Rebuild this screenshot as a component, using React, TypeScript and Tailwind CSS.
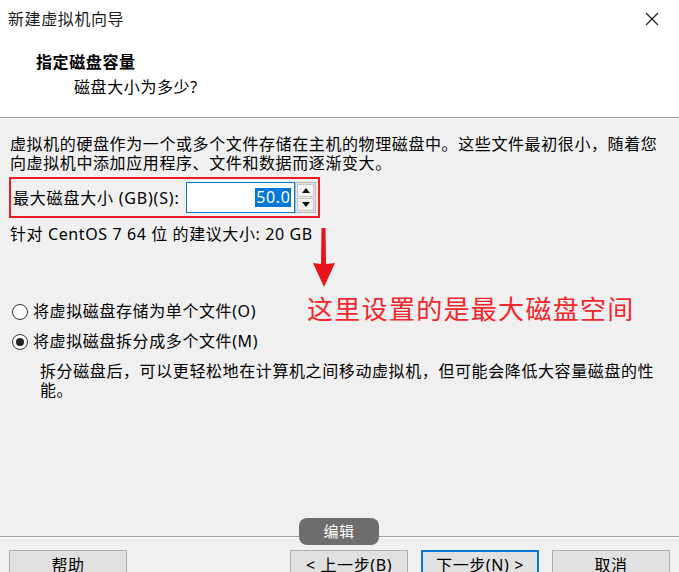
import React from "react";

function Radio({ checked }: { checked?: boolean }) {
    return (
        <span className="w-[16px] h-[16px] rounded-full border border-[#333] bg-white flex items-center justify-center shrink-0">
            {checked && <span className="w-[8px] h-[8px] rounded-full bg-[#222]" />}
        </span>
    );
}

function Btn({ label, primary, className }: { label: string; primary?: boolean; className?: string }) {
    return (
        <button
            className={
                "h-[30px] w-[118px] bg-[#e1e1e1] text-[16px] text-black " +
                (primary ? "border-2 border-[#0078d7] " : "border border-[#adadad] ") +
                (className ?? "")
            }
        >
            {label}
        </button>
    );
}

export default function App() {
    return (
        <div
            className="relative w-[679px] h-[572px] overflow-hidden bg-[#f0f0f0] text-black tracking-[0.6px]"
            style={{ fontFamily: '"Noto Sans", "Noto Sans CJK SC", sans-serif' }}
        >
            {/* header */}
            <header className="bg-white h-[117px] flex flex-col">
                <div className="h-[37px] flex items-center justify-between pl-[8px] pr-[20px]">
                    <span className="text-[16px] text-[#1a1a1a]">新建虚拟机向导</span>
                    <svg width="14" height="14" viewBox="0 0 14 14">
                        <path d="M1 1 L13 13 M13 1 L1 13" stroke="#222" strokeWidth="1.3" />
                    </svg>
                </div>
                <h1 className="pl-[36px] mt-[14px] text-[16px] font-bold leading-[22px]">指定磁盘容量</h1>
                <p className="pl-[74px] mt-[3px] text-[16px] leading-[22px]">磁盘大小为多少?</p>
            </header>
            <div className="h-[2px] border-t border-[#a0a0a0] bg-white" />

            {/* body */}
            <section className="px-[10px] pt-[16px] text-[16px]">
                <p className="leading-[19px]">
                    虚拟机的硬盘作为一个或多个文件存储在主机的物理磁盘中。这些文件最初很小，随着您
                    <br />
                    向虚拟机中添加应用程序、文件和数据而逐渐变大。
                </p>

                <div className="mt-[4px] -ml-[1px] w-[311px] h-[41px] border-2 border-[#ee1c25] flex items-center pl-[2px]">
                    <span className="leading-[20px] tracking-[0.8px]">最大磁盘大小 (GB)(S):</span>
                    <div className="ml-[7px] flex h-[31px]">
                        <div className="w-[109px] h-full border border-[#0078d7] bg-white flex items-center justify-end pr-[3px]">
                            <span className="bg-[#0078d7] text-white leading-[19px] px-[1px]">50.0</span>
                        </div>
                        <div className="w-[21px] h-full border border-[#b9b9b9] bg-[#e6e6e6] flex flex-col p-[1px] gap-[1px]">
                            <div className="flex-1 border border-[#c8c8c8] bg-[#f3f3f3] flex items-center justify-center">
                                <svg width="8" height="5" viewBox="0 0 8 5"><path d="M0 5 L4 0 L8 5 Z" fill="#111" /></svg>
                            </div>
                            <div className="flex-1 border border-[#c8c8c8] bg-[#f3f3f3] flex items-center justify-center">
                                <svg width="8" height="5" viewBox="0 0 8 5"><path d="M0 0 L4 5 L8 0 Z" fill="#111" /></svg>
                            </div>
                        </div>
                    </div>
                </div>

                <p className="mt-[7px] leading-[19px]">针对 CentOS 7 64 位 的建议大小: 20 GB</p>

                <div className="mt-[58px] flex flex-col gap-[11px]">
                    <label className="flex items-center gap-[5px] pl-[2px] leading-[19px]">
                        <Radio />
                        <span>将虚拟磁盘存储为单个文件(O)</span>
                    </label>
                    <label className="flex items-center gap-[5px] pl-[2px] leading-[19px]">
                        <Radio checked />
                        <span>将虚拟磁盘拆分成多个文件(M)</span>
                    </label>
                </div>
                <p className="mt-[11px] pl-[30px] leading-[19px]">
                    拆分磁盘后，可以更轻松地在计算机之间移动虚拟机，但可能会降低大容量磁盘的性
                    <br />
                    能。
                </p>
            </section>

            {/* footer */}
            <footer className="absolute left-0 right-0 top-[536px]">
                <div className="h-[2px] border-t border-[#a0a0a0] bg-white" />
                <div className="flex items-start pt-[12px] px-[9px]">
                    <Btn label="帮助" className="w-[117px]" />
                    <Btn label="< 上一步(B)" className="ml-auto" />
                    <Btn label="下一步(N) >" primary className="ml-[13px] w-[117px]" />
                    <Btn label="取消" className="ml-[13px] w-[117px]" />
                </div>
            </footer>

            {/* annotation arrow */}
            <svg className="absolute left-[310px] top-[226px]" width="28" height="62" viewBox="0 0 28 62">
                <path d="M11.5 2 L15.5 2 L16 38 L25 37 L14 61 L3 37 L11 38 Z" fill="#e8141c" />
            </svg>
            <span className="absolute left-[307px] top-[292px] text-[26px] leading-[34px] tracking-[1.3px] text-[#f3262e]">
                这里设置的是最大磁盘空间
            </span>

            {/* tooltip */}
            <div className="absolute left-[299px] top-[518px] w-[80px] h-[27px] rounded-[8px] bg-[#6d6d6d] text-white text-[15px] flex items-center justify-center">
                编辑
            </div>
        </div>
    );
}
